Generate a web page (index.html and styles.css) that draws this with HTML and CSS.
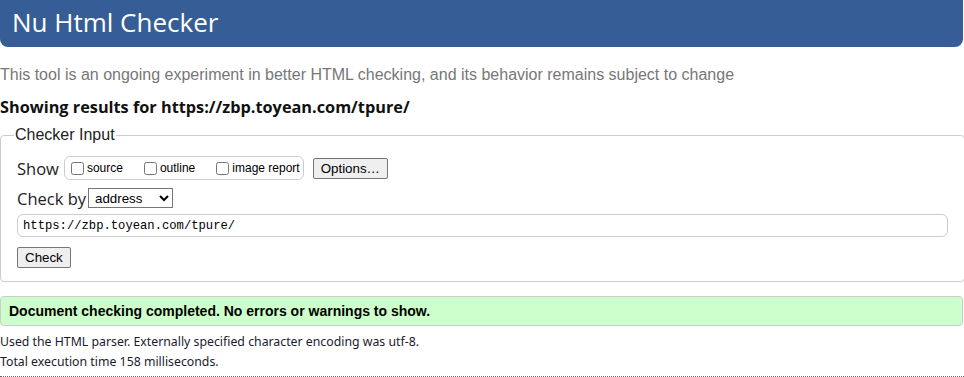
FILE: index.html
```html
<!DOCTYPE html>
<html lang="en">
<head>
    <meta charset="UTF-8">
    <title>Showing results for https://zbp.toyean.com/tpure/ - Nu Html Checker</title>
    <link rel="stylesheet" href="styles.css">
</head>
<body>
    <h1 class="title">Nu Html Checker</h1>
    <p class="intro">This tool is an ongoing experiment in better HTML checking, and its behavior remains subject to change</p>
    <p class="results">Showing results for https://zbp.toyean.com/tpure/</p>

    <fieldset class="checker">
        <legend>Checker Input</legend>
        <div class="row show-row">
            <span class="label">Show</span>
            <fieldset class="show-box">
                <label><input type="checkbox"> source</label>
                <label><input type="checkbox"> outline</label>
                <label><input type="checkbox"> image report</label>
            </fieldset>
            <button class="btn">Options…</button>
        </div>
        <div class="row by-row">
            <span class="label">Check by</span>
            <select class="select">
                <option>address</option>
            </select>
        </div>
        <input class="doc" type="text" value="https://zbp.toyean.com/tpure/">
        <button class="btn">Check</button>
    </fieldset>

    <p class="success">Document checking completed. No errors or warnings to show.</p>
    <div class="details">
        <p>Used the HTML parser. Externally specified character encoding was utf-8.</p>
        <p>Total execution time 158 milliseconds.</p>
    </div>
</body>
</html>
```

FILE: styles.css
```css
body {
    font-family: "Liberation Sans", Arial, sans-serif;
    background-color: #fff;
    color: #000;
    margin: 0;
    width: 964px;
}
.title {
    margin: 0;
    height: 47px;
    padding-left: 12px;
    box-sizing: border-box;
    width: 963px;
    background-color: #365d95;
    color: #fff;
    font-family: "Open Sans", sans-serif;
    font-weight: normal;
    font-size: 26px;
    line-height: 45px;
    border-radius: 0 0 8px 8px;
}
.intro {
    margin: 18px 0 0;
    font-size: 16px;
    line-height: 20px;
    color: #777;
}
.results {
    margin: 11px 0 0;
    font-family: "Open Sans", sans-serif;
    font-weight: bold;
    font-size: 16.3px;
    line-height: 22px;
    color: #111;
}
.checker {
    margin: 8px 0 0;
    width: 963px;
    box-sizing: border-box;
    border: 1px solid #ccc;
    border-radius: 4px;
    padding: 12px 16px 13px 16px;
}
.checker legend {
    padding: 0 1px;
    margin-left: -3px;
    font-size: 16px;
    color: #222;
}
.row {
    display: flex;
    align-items: center;
}
.show-row {
    height: 24px;
    margin-bottom: 8px;
}
.by-row {
    height: 20px;
    margin-bottom: 6px;
}
.label {
    font-family: "Open Sans", sans-serif;
    font-size: 16.5px;
    color: #222;
    margin-right: 5px;
}
.by-row .label {
    margin-right: 2px;
}
.show-box {
    display: flex;
    align-items: center;
    margin: 0 9px 0 0;
    padding: 0 3px 0 6px;
    height: 24px;
    box-sizing: border-box;
    border: 1px solid #ccc;
    border-radius: 6px;
}
.show-box label {
    font-size: 12px;
    display: flex;
    align-items: center;
    margin-right: 21px;
}
.show-box label:last-child {
    margin-right: 0;
}
.show-box input {
    margin: 0 3px 0 0;
    width: 13px;
    height: 13px;
}
.btn {
    font-family: "Liberation Sans", Arial, sans-serif;
    font-size: 13.33px;
    padding: 0 7px;
    height: 21px;
    border: 1px solid #767676;
    border-radius: 2px;
    background-color: #efefef;
    color: #000;
}
.select {
    font-family: "Liberation Sans", Arial, sans-serif;
    font-size: 13.33px;
    height: 20px;
    width: 85px;
    border: 1px solid #767676;
    border-radius: 0;
    background: #fff;
    padding: 0 2px;
}
.doc {
    display: block;
    width: 931px;
    height: 23px;
    box-sizing: border-box;
    margin: 0 0 10px;
    padding: 0 5px;
    font-family: "Liberation Mono", "DejaVu Sans Mono", monospace;
    font-size: 12.2px;
    border: 1px solid #ccc;
    border-radius: 6px;
    color: #000;
}
.success {
    margin: 14px 0 0;
    width: 963px;
    box-sizing: border-box;
    height: 30px;
    padding: 0 8px;
    line-height: 28px;
    background-color: #ccffcc;
    border: 1px solid #ccc;
    border-radius: 4px;
    font-size: 14px;
    font-weight: bold;
}
.details {
    margin-top: 6px;
    border-bottom: 1px dotted #666;
    padding-bottom: 4px;
}
.details p {
    margin: 0;
    font-family: "Noto Sans", sans-serif;
    font-size: 12.3px;
    line-height: 20px;
    color: #1a1a2e;
}
```
